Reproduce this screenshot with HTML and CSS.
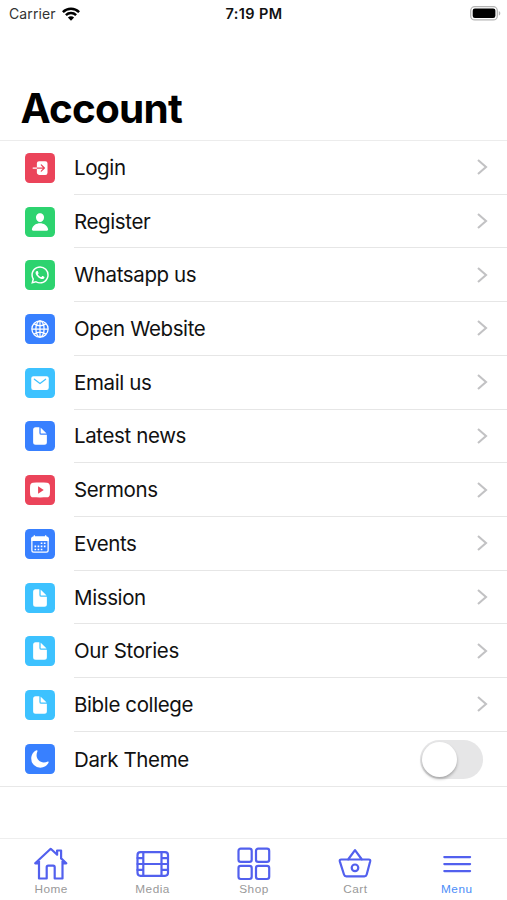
FILE: index.html
```html
<!DOCTYPE html>
<html lang="en">
<head>
<meta charset="utf-8">
<title>Account</title>
<link rel="stylesheet" href="styles.css">
</head>
<body>
<svg class="defs" aria-hidden="true">
  <symbol id="chevron" viewBox="0 0 12 18"><path d="M2 2l8 7-8 7" fill="none" stroke="#c2c2c4" stroke-width="2.1"/></symbol>
  <symbol id="doc" viewBox="0 0 512 512"><path d="M428 224H288a48 48 0 0 1-48-48V36a4 4 0 0 0-4-4h-92a64 64 0 0 0-64 64v320a64 64 0 0 0 64 64h224a64 64 0 0 0 64-64V228a4 4 0 0 0-4-4z"/><path d="M419.2 188.600L275.400 44.700a2 2 0 0 0-3.400 1.500V176a16 16 0 0 0 16 16h129.800a2 2 0 0 0 1.400-3.400z"/></symbol>
</svg>
<div class="screen">
  <header class="status">
    <div class="carrier"><span>Carrier</span>
      <svg class="wifi" viewBox="0 0 18 14"><g fill="none" stroke="#000" stroke-width="2.5"><path d="M.9 5.100a11.600 11.600 0 0 1 16.200 0"/><path d="M3.900 8.200a7.300 7.300 0 0 1 10.200 0"/></g><path d="M9 13.700L5.900 10.600a4.400 4.400 0 0 1 6.200 0z"/></svg>
    </div>
    <div class="time">7:19 PM</div>
    <svg class="battery" viewBox="0 0 31 15"><rect x=".7" y=".7" width="26.600" height="13.200" rx="4" fill="#fff" stroke="#b4b4b4" stroke-width="1.300"/><rect x="2.700" y="2.600" width="22.700" height="9.400" rx="2.200"/><path d="M28.800 5v4.600c2-.8 2-3.800 0-4.600z" fill="#b4b4b4"/></svg>
  </header>
  <h1>Account</h1>
  <ul class="list">
    <li><span class="tile red"><svg viewBox="0 0 512 512"><path d="M392 80H232a56.060 56.060 0 0 0-56 56v104h153.400l-52.700-52.700a16 16 0 0 1 22.600-22.600l80 80a16 16 0 0 1 0 22.600l-80 80a16 16 0 0 1-22.600-22.600l52.700-52.700H176v104c0 32.100 33.800 56 64 56h152a56.060 56.060 0 0 0 56-56V136a56.060 56.060 0 0 0-56-56zM80 240a16 16 0 0 0 0 32h96v-32z"/></svg></span><div class="row"><span>Login</span><svg class="chev"><use href="#chevron"/></svg></div></li>
    <li><span class="tile green"><svg viewBox="0 0 512 512"><path d="M332.600 64.600C313.300 43.700 286.300 32.200 256.500 32.200c-30 0-57.100 11.400-76.300 32.200-19.500 21.100-28.900 49.800-26.700 80.800C157.900 206.300 204 256 256.500 256s98.600-49.700 102.900-110.800c2.200-30.700-7.400-59.300-26.800-80.600zM432 480H80a31 31 0 0 1-24.200-11.100c-6.500-7.800-9.100-18.400-7.200-29.100C57.100 392.600 83.600 353 125.300 325 162.200 300.100 208.700 286.400 256 286.400s93.800 13.700 130.700 38.500c41.700 28 68.300 67.600 76.800 114.800 1.900 10.800-.7 21.400-7.200 29.200A31 31 0 0 1 432 480z"/></svg></span><div class="row"><span>Register</span><svg class="chev"><use href="#chevron"/></svg></div></li>
    <li><span class="tile green"><svg viewBox="0 0 512 512"><path fill-rule="evenodd" d="M414.700 97.100A222.100 222.100 0 0 0 256.900 32C134 32 33.900 131.600 33.900 254a220.600 220.600 0 0 0 29.800 111L32 480l118.300-30.900a223.600 223.600 0 0 0 106.600 27C379.900 476.100 480 376.500 480 254a220.600 220.600 0 0 0-65.300-156.900zM256.900 438.700a185.800 185.800 0 0 1-94.400-25.700l-6.800-4-70.200 18.300 18.800-68.100-4.400-7A183.500 183.500 0 0 1 71.500 254.100c0-101.800 83.200-184.500 185.500-184.500a184.900 184.900 0 0 1 185.400 184.700c0 101.700-83.200 184.400-185.500 184.400zm101.700-138.200c-5.500-2.800-32.900-16.200-38-18-5.200-1.900-8.900-2.800-12.600 2.700-3.700 5.600-14.400 18.100-17.600 21.800-3.300 3.700-6.500 4.200-12.100 1.400-5.600-2.700-23.500-8.600-44.800-27.500-16.500-14.700-27.700-32.900-31-38.400s-.3-8.600 2.400-11.300c2.500-2.500 5.600-6.500 8.400-9.700 2.700-3.300 3.700-5.600 5.500-9.300 1.900-3.700 1-6.900-.4-9.700-1.400-2.800-12.500-30.100-17.200-41.300-4.500-10.800-9.100-9.400-12.600-9.500-3.200-.2-6.900-.2-10.600-.2a20.600 20.600 0 0 0-14.900 6.900c-5.100 5.600-19.500 19-19.500 46.300s20 53.700 22.800 57.400c2.800 3.800 39.400 59.800 95.400 83.900a323.100 323.100 0 0 0 31.800 11.700c13.400 4.300 25.600 3.600 35.200 2.200 10.800-1.600 33.100-13.400 37.700-26.500 4.700-13 4.700-24.100 3.300-26.400-1.400-2.400-5.100-3.800-10.700-6.500z"/></svg></span><div class="row"><span>Whatsapp us</span><svg class="chev"><use href="#chevron"/></svg></div></li>
    <li><span class="tile blue"><svg viewBox="0 0 512 512"><g fill="none" stroke="#fff" stroke-width="32"><circle cx="256" cy="256" r="208"/><ellipse cx="256" cy="256" rx="105" ry="208"/><path d="M256 48v416M48 256h416M106 125c90 58 210 58 300 0M106 387c90-58 210-58 300 0"/></g></svg></span><div class="row"><span>Open Website</span><svg class="chev"><use href="#chevron"/></svg></div></li>
    <li><span class="tile sky"><svg viewBox="0 0 512 512"><path d="M424 80H88a56.060 56.060 0 0 0-56 56v240a56.060 56.060 0 0 0 56 56h336a56.060 56.060 0 0 0 56-56V136a56.060 56.060 0 0 0-56-56zm-14.200 92.600l-144 112a16 16 0 0 1-19.600 0l-144-112a16 16 0 1 1 19.600-25.200L256 251.700l134.200-104.300a16 16 0 0 1 19.600 25.200z"/></svg></span><div class="row"><span>Email us</span><svg class="chev"><use href="#chevron"/></svg></div></li>
    <li><span class="tile blue"><svg><use href="#doc"/></svg></span><div class="row"><span>Latest news</span><svg class="chev"><use href="#chevron"/></svg></div></li>
    <li><span class="tile red"><svg viewBox="0 0 512 512"><path fill-rule="evenodd" d="M508.600 148.800c0-45-33.100-81.200-74-81.200C379.200 65 322.700 64 265 64h-18c-57.600 0-114.200 1-169.600 3.600C36.600 67.600 3.500 104 3.500 149 1 184.600-.1 220.200 0 255.800c-.1 35.600 1 71.200 3.400 106.900 0 45 33.100 81.500 73.900 81.500 58.200 2.700 117.900 3.900 178.600 3.800 60.800.2 120.300-1 178.600-3.800 40.900 0 74-36.500 74-81.500 2.400-35.700 3.500-71.300 3.400-107 .2-35.600-.9-71.200-3.300-106.900zM207 353.900V157.400l145 98.200z"/></svg></span><div class="row"><span>Sermons</span><svg class="chev"><use href="#chevron"/></svg></div></li>
    <li><span class="tile blue"><svg viewBox="0 0 512 512"><path d="M96 64V32h32v32h256V32h32v32a64 64 0 0 1 64 64v48H32v-48a64 64 0 0 1 64-64z"/><rect x="48" y="80" width="416" height="384" rx="48" fill="none" stroke="#fff" stroke-width="32"/><path d="M275 216h42v42h-42zM355 216h42v42h-42zM275 296h42v42h-42zM355 296h42v42h-42zM115 296h42v42h-42zM195 296h42v42h-42zM115 376h42v42h-42zM195 376h42v42h-42zM275 376h42v42h-42z"/></svg></span><div class="row"><span>Events</span><svg class="chev"><use href="#chevron"/></svg></div></li>
    <li><span class="tile sky"><svg><use href="#doc"/></svg></span><div class="row"><span>Mission</span><svg class="chev"><use href="#chevron"/></svg></div></li>
    <li><span class="tile sky"><svg><use href="#doc"/></svg></span><div class="row"><span>Our Stories</span><svg class="chev"><use href="#chevron"/></svg></div></li>
    <li><span class="tile sky"><svg><use href="#doc"/></svg></span><div class="row"><span>Bible college</span><svg class="chev"><use href="#chevron"/></svg></div></li>
    <li><span class="tile blue"><svg viewBox="0 0 512 512"><path d="M264 480A232 232 0 0 1 32 248C32 154 84 69 170 33.700a16 16 0 0 1 21 21C176 88 168 123.900 168 160c0 101.500 82.500 184 184 184 36.100 0 72-8 105.300-23a16 16 0 0 1 21 21C443 428 358 480 264 480z"/></svg></span><div class="row"><span>Dark Theme</span><span class="switch"></span></div></li>
  </ul>
  <nav class="tabs">
    <a><svg viewBox="0 0 36 36"><path d="M2.200 17.300L17.700 2.800l4.900 4.500 1.500 1.400V4.500h4v7.900l5.200 4.900h-3.800v15.200H21.700V21.200q0-1.500-1.500-1.500h-5q-1.500 0-1.500 1.500v11.300H6V17.300zM6 17.300v-3.500M29.500 17.300v-3.500"/></svg><span>Home</span></a>
    <a><svg viewBox="0 0 36 36"><rect x="2.500" y="6.200" width="30.500" height="23.600" rx="3"/><path d="M8.300 6.200v23.600M26.500 6.200v23.600M8.300 18h18.200M2.500 12.100h5.800M2.500 18h5.800M2.500 23.900h5.800M26.500 12.100H33M26.500 18H33M26.500 23.900H33"/></svg><span>Media</span></a>
    <a><svg viewBox="0 0 36 36"><rect x="2.500" y="2.700" width="13.200" height="13.200" rx="2.200"/><rect x="20" y="2.700" width="13.200" height="13.200" rx="2.200"/><rect x="2.500" y="19.800" width="13.200" height="13.200" rx="2.200"/><rect x="20" y="19.800" width="13.200" height="13.200" rx="2.200"/></svg><span>Shop</span></a>
    <a><svg viewBox="0 0 36 36"><path d="M4.200 13.500h27.600q1.800 0 1.400 1.800l-3.500 13.200q-.5 1.800-2.300 1.800H9.300q-1.800 0-2.300-1.800L2.800 15.300q-.4-1.800 1.400-1.800zM11.100 13.500L18 4.200l6.900 9.300"/><circle cx="18" cy="21.800" r="3.300"/></svg><span>Cart</span></a>
    <a class="active"><svg viewBox="0 0 36 36"><path d="M5.300 11.100h25.800M5.300 18.100h25.800M5.300 25.100h25.800"/></svg><span>Menu</span></a>
  </nav>
</div>
</body>
</html>
```
FILE: styles.css
```css
* { box-sizing: border-box; }
body { margin: 0; background: #fff; color: #111; font-family: Inter, "Liberation Sans", sans-serif; }
.defs { display: none; }
.screen { width: 507px; height: 900px; display: flex; flex-direction: column; overflow: hidden; }
.status { height: 28px; flex: none; display: grid; grid-template-columns: 1fr auto 1fr; align-items: center; padding: 0 6px 1px 9px; font-size: 14px; line-height: 20px; }
.carrier { display: flex; align-items: center; gap: 6px; color: #333; letter-spacing: .1px; }
.wifi { width: 18px; height: 14px; }
.time { font-weight: 600; font-size: 14.500px; letter-spacing: .4px; margin-right: 2px; color: #111; }
.battery { width: 31px; height: 15px; justify-self: end; }
h1 { flex: none; height: 112px; margin: 0; padding: 56px 0 0 20.500px; color: #000; font-size: 40.500px; line-height: 50px; font-weight: 700; letter-spacing: -.8px; }
.list { flex: none; height: 646.500px; margin: 0; padding: 0; list-style: none; display: grid; grid-template-rows: repeat(12, 1fr); border-top: 1.500px solid #ececec; border-bottom: 1.500px solid #e8e8e8; }
.list li { display: flex; align-items: center; padding-left: 25px; }
.tile { width: 30px; height: 30px; flex: none; margin-right: 19px; border-radius: 4.500px; display: grid; place-items: center; }
.tile svg { width: 20px; height: 20px; fill: #fff; }
.red { background: #eb445a; }
.green { background: #2dd36f; }
.blue { background: #3880ff; }
.sky { background: #3dc2ff; }
.row { flex: 1; align-self: stretch; display: flex; align-items: center; justify-content: space-between; padding-right: 19px; border-bottom: 1px solid #e6e6e6; font-size: 20.500px; letter-spacing: -.38px; }
li:last-child .row { border-bottom: 0; padding: 2px 24px 0 0; }
.chev { width: 12px; height: 18px; }
.switch { width: 63px; height: 39px; border-radius: 20px; background: #e6e6e7; display: flex; align-items: center; padding-left: 2px; }
.switch::before { content: ""; width: 35px; height: 35px; border-radius: 50%; background: #fff; box-shadow: 0 2px 3px rgba(0,0,0,.28); }
.tabs { margin-top: auto; flex: none; height: 62px; display: grid; grid-template-columns: repeat(5, 1fr); border-top: 1px solid #eee; }
.tabs a { display: flex; flex-direction: column; align-items: center; padding: 7px 0 0 1px; color: #999; font: 11.800px/15px "Liberation Sans", sans-serif; letter-spacing: .5px; }
.tabs svg { width: 36px; height: 36px; fill: none; stroke: #5260ee; stroke-width: 2.200; stroke-linecap: round; stroke-linejoin: round; }
.tabs .active { color: #4b8df8; }
```
